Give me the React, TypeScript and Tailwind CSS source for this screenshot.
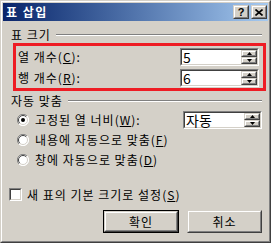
import React from 'react';

const font = { fontFamily: '"Noto Sans CJK KR", "Liberation Sans", sans-serif' };

function Mn({ c }: { c: string }) {
  return (
    <>
      (<span className="underline underline-offset-1">{c}</span>)
    </>
  );
}

function Sunken({ className = '', children }: { className?: string; children?: React.ReactNode }) {
  return (
    <div className={`border border-t-[#808080] border-l-[#808080] border-r-white border-b-white ${className}`}>
      <div className="h-full w-full border border-t-[#404040] border-l-[#404040] border-r-[#d4d0c8] border-b-[#d4d0c8] bg-white">
        {children}
      </div>
    </div>
  );
}

function Raised({ className = '', children }: { className?: string; children?: React.ReactNode }) {
  return (
    <div className={`border border-t-[#d4d0c8] border-l-[#d4d0c8] border-r-[#404040] border-b-[#404040] bg-[#d4d0c8] ${className}`}>
      <div className="flex h-full w-full items-center justify-center border border-t-white border-l-white border-r-[#808080] border-b-[#808080]">
        {children}
      </div>
    </div>
  );
}

function Spin({ value }: { value: string }) {
  return (
    <Sunken className="h-[18px] w-[79px]">
      <div className="flex h-full items-center">
        <span className="flex-1 pl-[1px] text-[14px] leading-none tracking-normal text-black">{value}</span>
        <div className="flex h-full w-[16px] flex-col">
          <Raised className="h-1/2 w-full">
            <svg width="5" height="3" viewBox="0 0 5 3"><path d="M2.5 0 L5 3 L0 3 Z" fill="#000" /></svg>
          </Raised>
          <Raised className="h-1/2 w-full">
            <svg width="5" height="3" viewBox="0 0 5 3"><path d="M0 0 L5 0 L2.5 3 Z" fill="#000" /></svg>
          </Raised>
        </div>
      </div>
    </Sunken>
  );
}

function Radio({ checked }: { checked?: boolean }) {
  return (
    <svg width="12" height="12" viewBox="0 0 12 12" className="shrink-0">
      <circle cx="6" cy="6" r="5.5" fill="#fff" />
      <path d="M10 2 A5.5 5.5 0 0 0 2 10" stroke="#808080" strokeWidth="1" fill="none" />
      <path d="M9.2 2.8 A4.5 4.5 0 0 0 2.8 9.2" stroke="#404040" strokeWidth="1" fill="none" />
      <path d="M2 10 A5.5 5.5 0 0 0 10 2" stroke="#fff" strokeWidth="1" fill="none" />
      <path d="M2.8 9.2 A4.5 4.5 0 0 0 9.2 2.8" stroke="#d4d0c8" strokeWidth="1" fill="none" />
      {checked && <circle cx="6" cy="6" r="2" fill="#000" />}
    </svg>
  );
}

function GroupHeader({ title }: { title: string }) {
  return (
    <div className="flex h-[12px] items-center pl-[8px] pr-[6px]">
      <span className="text-[12px] leading-none">{title}</span>
      <div className="ml-[5px] flex-1 border-t border-b border-t-[#808080] border-b-white" />
    </div>
  );
}

export default function App() {
  return (
    <div className="h-[243px] w-[271px] text-black" style={font}>
      <div className="h-full w-full border border-t-[#d4d0c8] border-l-[#d4d0c8] border-r-[#404040] border-b-[#404040] bg-[#d4d0c8]">
        <div className="flex h-full w-full flex-col border border-t-white border-l-white border-r-[#808080] border-b-[#808080] p-[1px]">
          {/* Title bar */}
          <div className="flex h-[18px] items-center bg-gradient-to-r from-[#0a246a] to-[#a6caf0] pl-[3px] pr-[1px]">
            <span className="flex-1 text-[12px] font-bold leading-none tracking-[1.5px] text-white">표 삽입</span>
            <Raised className="h-[14px] w-[16px]">
              <span className="text-[11px] font-bold leading-none" style={{ fontFamily: '"Liberation Sans", sans-serif' }}>?</span>
            </Raised>
            <Raised className="ml-[2px] h-[14px] w-[16px]">
              <svg width="8" height="7" viewBox="0 0 8 7"><path d="M0.5 0.5 L7.5 6.5 M7.5 0.5 L0.5 6.5" stroke="#000" strokeWidth="1.6" /></svg>
            </Raised>
          </div>

          {/* Content */}
          <div className="flex flex-1 flex-col pt-[8px] text-[12px] tracking-[1px]">
            <GroupHeader title="표 크기" />

            <div className="ml-[10px] mr-[2px] mt-[2px] flex flex-col gap-[3px] border-[3px] border-[#ee1c24] pb-[1px] pl-[2px] pr-[4px] pt-[2px]">
              <div className="flex items-center justify-between">
                <span className="leading-none">열 개수<Mn c="C" />:</span>
                <Spin value="5" />
              </div>
              <div className="flex items-center justify-between">
                <span className="leading-none">행 개수<Mn c="R" />:</span>
                <Spin value="6" />
              </div>
            </div>

            <div className="mt-[4px]">
              <GroupHeader title="자동 맞춤" />
            </div>

            <div className="mt-[3px] flex flex-col pl-[14px] pr-[6px]">
              <div className="flex h-[20px] items-center">
                <Radio checked />
                <span className="ml-[6px] flex-1 leading-none">고정된 열 너비<Mn c="W" />:</span>
                <Spin value="자동" />
              </div>
              <div className="flex h-[20px] items-center">
                <Radio />
                <span className="ml-[6px] leading-none">내용에 자동으로 맞춤<Mn c="F" /></span>
              </div>
              <div className="flex h-[20px] items-center">
                <Radio />
                <span className="ml-[6px] leading-none">창에 자동으로 맞춤<Mn c="D" /></span>
              </div>
            </div>

            <div className="mt-[15px] flex h-[19px] items-center pl-[6px]">
              <Sunken className="h-[13px] w-[13px] shrink-0" />
              <span className="ml-[5px] leading-none">새 표의 기본 크기로 설정<Mn c="S" /></span>
            </div>

            <div className="mt-[6px] flex justify-end gap-[8px] pr-[6px]">
              <div className="h-[23px] w-[76px] border border-black">
                <Raised className="h-full w-full">
                  <span className="leading-none">확인</span>
                </Raised>
              </div>
              <Raised className="h-[23px] w-[75px]">
                <span className="leading-none">취소</span>
              </Raised>
            </div>
          </div>
        </div>
      </div>
    </div>
  );
}
